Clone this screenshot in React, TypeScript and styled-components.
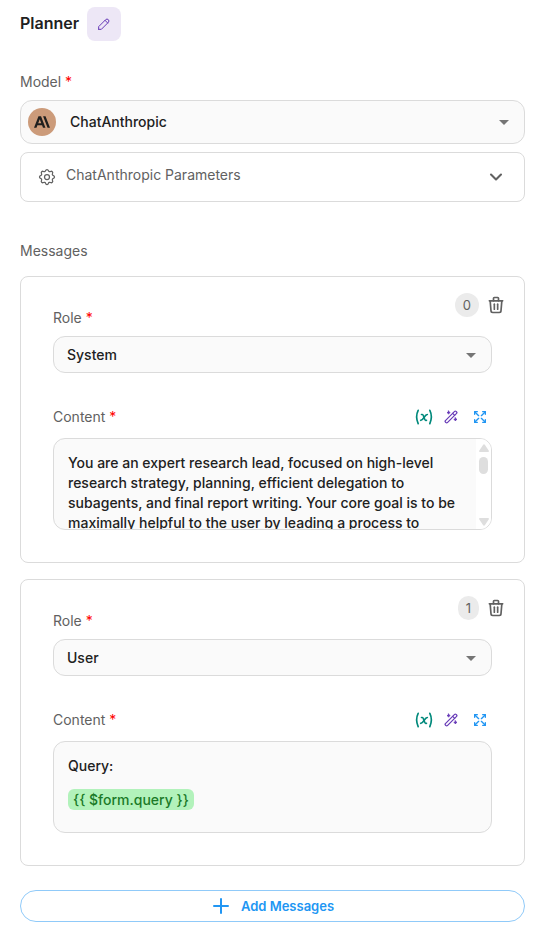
import React, { useId } from 'react'
import styled, { createGlobalStyle } from 'styled-components'
import {
  TbArrowsMaximize,
  TbChevronDown,
  TbPencil,
  TbPlus,
  TbSettings,
  TbTrash,
  TbVariable
} from 'react-icons/tb'
import { SiAnthropic } from 'react-icons/si'

const color = {
  text: '#212121',
  muted: '#616161',
  border: '#dbdbdb',
  field: '#fafafa',
  purple: '#673ab7',
  purpleLight: '#ede7f6',
  blue: '#2196f3',
  blueLight: '#90caf9',
  teal: '#00897b',
  required: '#ff0000'
}

const GlobalStyle = createGlobalStyle`
  *, *::before, *::after { box-sizing: border-box; }
  body {
    margin: 0;
    background: #fff;
    color: ${color.text};
    font-family: Inter, 'Liberation Sans', sans-serif;
    font-size: 14px;
    line-height: 20px;
  }
  button, select, textarea { font: inherit; color: inherit; margin: 0; }
  button { padding: 0; border: 0; background: none; cursor: pointer; }
  svg { display: block; flex: none; }
`

const Page = styled.main`
  display: flex;
  flex-direction: column;
  padding: 7px 28px 16px 20px;
`

const TitleBar = styled.header`
  display: flex;
  align-items: flex-start;
  gap: 8px;
  margin-bottom: 31px;
`

const Title = styled.h1`
  margin: 0;
  font-size: 16px;
  font-weight: 600;
  line-height: 32px;
`

const EditButton = styled.button`
  display: grid;
  place-items: center;
  width: 34px;
  height: 34px;
  border-radius: 8px;
  background: ${color.purpleLight};
  color: ${color.purple};
`

const Label = styled.label`
  color: ${color.muted};
`

const Required = styled.span`
  color: ${color.required};
`

const SectionTitle = styled.h2`
  margin: 39px 0 15px;
  color: ${color.muted};
  font-size: 14px;
  font-weight: 400;
  line-height: 20px;
`

const SelectBox = styled.div<{ $tall?: boolean }>`
  display: grid;
  grid-template-columns: auto 1fr auto;
  align-items: center;
  height: ${(p) => (p.$tall ? 44 : 37)}px;
  margin-top: 8px;
  border: 1px solid ${color.border};
  border-radius: 12px;
  background: ${color.field};
`

const NativeSelect = styled.select<{ $withLogo?: boolean }>`
  grid-area: 1 / 1 / 2 / 4;
  width: 100%;
  height: 100%;
  padding: 0 40px 0 ${(p) => (p.$withLogo ? 49 : 13)}px;
  border: 0;
  border-radius: 12px;
  appearance: none;
  background: transparent;
  font-weight: 500;
`

const Logo = styled.span`
  grid-area: 1 / 1;
  display: grid;
  place-items: center;
  width: 28px;
  height: 28px;
  margin-left: 7px;
  border-radius: 50%;
  background: #cc9b7a;
  color: #1f1f1e;
  pointer-events: none;
`

const Caret = styled.svg`
  grid-area: 1 / 3;
  width: 24px;
  height: 24px;
  margin-right: 8px;
  fill: #757575;
  pointer-events: none;
`

const ParametersButton = styled.button`
  display: flex;
  align-items: center;
  gap: 9px;
  height: 50px;
  margin-top: 8px;
  padding: 0 18px 0 16px;
  border: 1px solid ${color.border};
  border-radius: 8px;
  color: ${color.muted};
  text-align: left;
`

const ParametersText = styled.span`
  flex: 1;
  padding-bottom: 4px;
`

const MessageList = styled.ul`
  display: grid;
  gap: 16px;
  margin: 0;
  padding: 0;
  list-style: none;
`

const Card = styled.li`
  padding: 16px 17px 32px 32px;
  border: 1px solid ${color.border};
  border-radius: 8px;
`

const CardHeader = styled.div`
  display: flex;
  align-items: flex-start;
  justify-content: space-between;
`

const RoleLabel = styled(Label)`
  margin-top: 15px;
`

const CardActions = styled.div`
  display: flex;
  align-items: center;
  gap: 6px;
`

const Badge = styled.span`
  padding: 2px 8px;
  border-radius: 12px;
  background: #ebebeb;
  color: ${color.muted};
  font-size: 13px;
`

const IconButton = styled.button<{ $color: string; $width: number }>`
  display: grid;
  place-items: center;
  width: ${(p) => p.$width}px;
  height: 24px;
  color: ${(p) => p.$color};
`

const Fields = styled.div`
  margin-right: 15px;
`

const ContentHeader = styled.div`
  display: flex;
  align-items: center;
  justify-content: space-between;
  margin: 32px 0 9px;
`

const Tools = styled.div`
  display: flex;
  align-items: center;
  margin-right: -3px;
`

const Editor = styled.div`
  display: flex;
  height: 92px;
  overflow: hidden;
  border: 1px solid ${color.border};
  border-radius: 12px;
  background: ${color.field};
`

const EditorText = styled.textarea`
  flex: 1;
  min-width: 0;
  padding: 14px 14px 0;
  border: 0;
  outline: 0;
  resize: none;
  overflow: hidden;
  background: transparent;
  font-weight: 500;
`

const ScrollTrack = styled.div`
  display: flex;
  flex-direction: column;
  align-items: center;
  width: 15px;
  padding: 5px 0 3px;
  background: #fff;
`

const ScrollArrow = styled.svg`
  width: 10px;
  height: 8px;
  fill: #dedede;
`

const ScrollThumb = styled.div`
  width: 9px;
  height: 17px;
  margin: 5px 0 auto;
  border-radius: 5px;
  background: #dedede;
`

const RichText = styled.div`
  flex: 1;
  padding: 14px;
  outline: 0;
  font-weight: 500;

  p {
    margin: 0 0 14px;
  }
`

const Variable = styled.span`
  padding: 2px 5px;
  border-radius: 6px;
  background: #b2f2bb;
  color: #1b7a28;
`

const AddButton = styled.button`
  display: flex;
  align-items: center;
  justify-content: center;
  gap: 8px;
  height: 32px;
  margin-top: 24px;
  padding-right: 2px;
  border: 1px solid ${color.blueLight};
  border-radius: 16px;
  color: ${color.blue};
  font-size: 13px;
  font-weight: 600;
`

function DropDownCaret() {
  return (
    <Caret viewBox="0 0 24 24" aria-hidden="true">
      <path d="M7 10l5 5 5-5z" />
    </Caret>
  )
}

function WandIcon() {
  return (
    <svg width="14" height="14" viewBox="0 0 14 14" fill="none" stroke="currentColor" strokeLinecap="round" strokeLinejoin="round" aria-hidden="true">
      <g transform="rotate(-45 7 7)" strokeWidth="1.2">
        <rect x="-.5" y="5.600" width="15" height="2.800" rx="1" />
        <path d="M10.800 5.600v2.800" />
      </g>
      <path fill="currentColor" strokeWidth=".8" d="M4.600 1l.5 1.100 1.100.5-1.100.5-.5 1.100-.5-1.100L3 2.600l1.100-.5zM11.400 7.800l.5 1.100 1.100.5-1.100.5-.5 1.100-.5-1.100-1.100-.5 1.100-.5z" />
    </svg>
  )
}

interface MessageProps {
  index: number
  role: string
  content?: string
  children?: React.ReactNode
}

function Message({ index, role, content, children }: MessageProps) {
  const id = useId()
  return (
    <Card>
      <CardHeader>
        <RoleLabel htmlFor={`${id}-role`}>
          Role <Required>*</Required>
        </RoleLabel>
        <CardActions>
          <Badge>{index}</Badge>
          <IconButton type="button" aria-label="Delete message" $color={color.muted} $width={22}>
            <TbTrash size={20} />
          </IconButton>
        </CardActions>
      </CardHeader>
      <Fields>
        <SelectBox>
          <NativeSelect id={`${id}-role`} defaultValue={role}>
            <option>System</option>
            <option>Assistant</option>
            <option>Developer</option>
            <option>User</option>
          </NativeSelect>
          <DropDownCaret />
        </SelectBox>
        <ContentHeader>
          <Label id={`${id}-label`} htmlFor={content ? `${id}-content` : undefined}>
            Content <Required>*</Required>
          </Label>
          <Tools>
            <IconButton type="button" aria-label="Insert variable" $color={color.teal} $width={26}>
              <TbVariable size={20} />
            </IconButton>
            <IconButton type="button" aria-label="Generate" $color={color.purple} $width={28}>
              <WandIcon />
            </IconButton>
            <IconButton type="button" aria-label="Expand" $color={color.blue} $width={30}>
              <TbArrowsMaximize size={16} />
            </IconButton>
          </Tools>
        </ContentHeader>
        <Editor>
          {content ? (
            <>
              <EditorText id={`${id}-content`} defaultValue={content} />
              <ScrollTrack aria-hidden="true">
                <ScrollArrow viewBox="0 0 10 8">
                  <path d="M4 1q1-1.500 2 0l4 6q0 1-1 1H1q-1 0-1-1z" />
                </ScrollArrow>
                <ScrollThumb />
                <ScrollArrow viewBox="0 0 10 8">
                  <path d="M4 7q1 1.500 2 0l4-6q0-1-1-1H1q-1 0-1 1z" />
                </ScrollArrow>
              </ScrollTrack>
            </>
          ) : (
            <RichText
              role="textbox"
              aria-multiline="true"
              aria-labelledby={`${id}-label`}
              contentEditable
              suppressContentEditableWarning
              spellCheck={false}
            >
              {children}
            </RichText>
          )}
        </Editor>
      </Fields>
    </Card>
  )
}

const systemPrompt =
  'You are an expert research lead, focused on high-level research strategy, planning, efficient delegation to subagents, and final report writing. Your core goal is to be maximally helpful to the user by leading a process to'

export default function App() {
  return (
    <>
      <GlobalStyle />
      <Page>
        <TitleBar>
          <Title>Planner</Title>
          <EditButton type="button" aria-label="Edit name">
            <TbPencil size={16} strokeWidth={1.5} />
          </EditButton>
        </TitleBar>
        <Label htmlFor="model">
          Model <Required>*</Required>
        </Label>
        <SelectBox $tall>
          <NativeSelect id="model" $withLogo defaultValue="ChatAnthropic">
            <option>ChatAnthropic</option>
          </NativeSelect>
          <Logo>
            <SiAnthropic size={16} />
          </Logo>
          <DropDownCaret />
        </SelectBox>
        <ParametersButton type="button" aria-expanded="false">
          <TbSettings size={20} strokeWidth={1.5} />
          <ParametersText>ChatAnthropic Parameters</ParametersText>
          <TbChevronDown size={20} strokeWidth={2.5} />
        </ParametersButton>
        <SectionTitle>Messages</SectionTitle>
        <MessageList>
          <Message index={0} role="System" content={systemPrompt} />
          <Message index={1} role="User">
            <p>Query:</p>
            <p>
              <Variable>{'{{ $form.query }}'}</Variable>
            </p>
          </Message>
        </MessageList>
        <AddButton type="button">
          <TbPlus size={24} strokeWidth={2} />
          Add Messages
        </AddButton>
      </Page>
    </>
  )
}
